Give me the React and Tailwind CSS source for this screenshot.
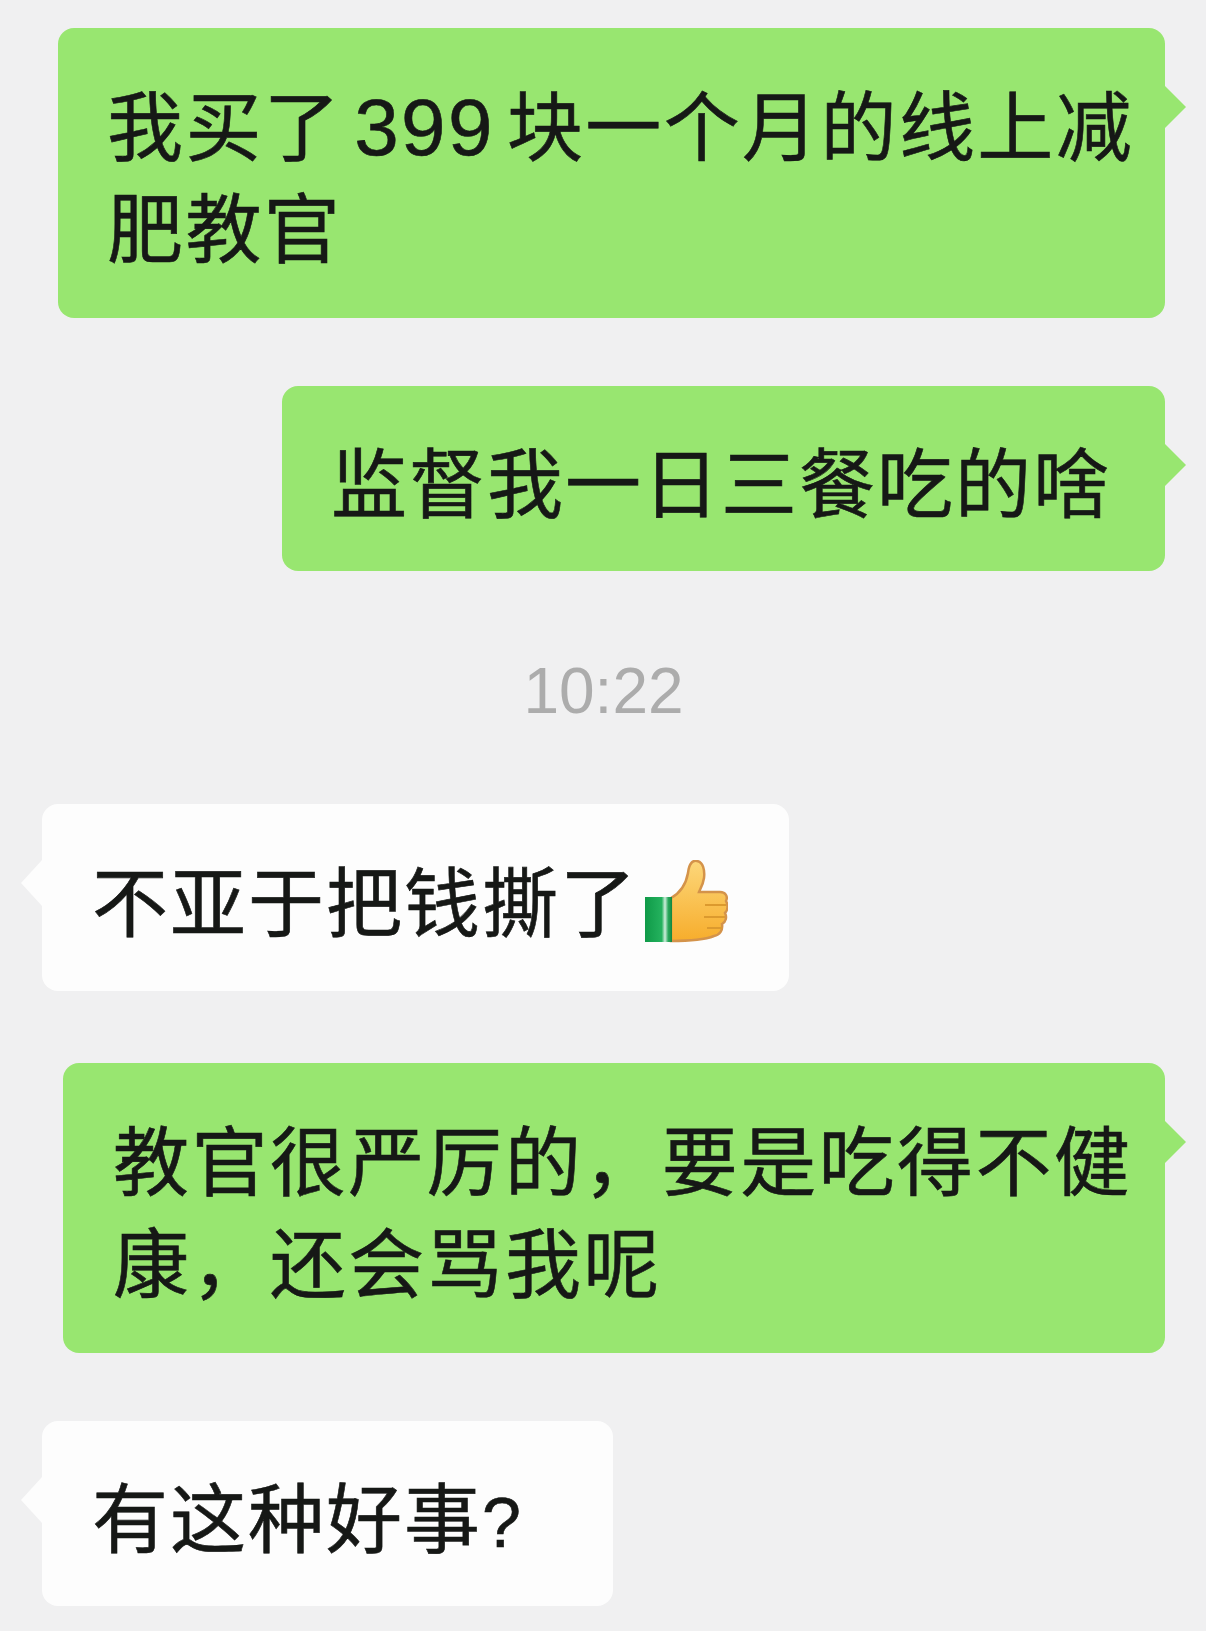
const font = { fontFamily: '"Noto Sans CJK SC", "Liberation Sans", sans-serif' };

function Bubble({ side, width, height, children, className }) {
  const isRight = side === "right";
  return (
    <div
      className={`relative flex flex-col justify-center rounded-[16px] ${isRight ? "self-end bg-[#98e670]" : "self-start bg-[#fdfdfd]"} ${className}`}
      style={{ width, height }}
    >
      {isRight ? (
        <div className="absolute left-full top-[58px] h-0 w-0 border-y-[21px] border-l-[21px] border-y-transparent border-l-[#98e670]" />
      ) : (
        <div className="absolute right-full top-[56px] h-0 w-0 border-y-[23px] border-r-[21px] border-y-transparent border-r-[#fdfdfd]" />
      )}
      {children}
    </div>
  );
}

function Thumb() {
  return (
    <svg width="84" height="84" viewBox="0 0 84 84" className="ml-[6px] mt-[8px] shrink-0">
      <defs>
        <linearGradient id="hand" x1="0" y1="0" x2="0" y2="1">
          <stop offset="0" stopColor="#fcd77a" />
          <stop offset="1" stopColor="#f7ad2c" />
        </linearGradient>
        <linearGradient id="cuff" x1="0" y1="0" x2="1" y2="0">
          <stop offset="0" stopColor="#0f9a48" />
          <stop offset="0.62" stopColor="#24b25e" />
          <stop offset="0.74" stopColor="#cfeedd" />
          <stop offset="0.86" stopColor="#2aa95d" />
          <stop offset="1" stopColor="#12863f" />
        </linearGradient>
      </defs>
      <path
        d="M27 38 C36 33 42 24 44 13 C45 3 49 0 53 1 C59 2 61 10 60 18 C59 25 56 29 55 32 L76 32 C82 32 84 37 82 41 C84 45 84 50 81 53 C83 57 82 62 78 64 C79 70 76 75 70 76 C60 80 40 81 27 81 Z"
        fill="url(#hand)"
        stroke="#d4934a"
        strokeWidth="2.5"
      />
      <path d="M61 45 L82 45 M60 57 L81 57 M63 68 L78 68" stroke="#dc9a2e" strokeWidth="2" fill="none" />
      <rect x="1" y="37" width="27" height="45" fill="url(#cuff)" />
    </svg>
  );
}

const textClass = "whitespace-nowrap text-[76px] leading-[102px] tracking-[2px] [-webkit-text-stroke:0.6px_#161816]";
const wideClass = "whitespace-nowrap text-[76px] leading-[102px] tracking-[2.4px] [-webkit-text-stroke:0.6px_#161816]";

export default function App() {
  return (
    <div className="flex h-[1631px] w-[1206px] flex-col overflow-hidden bg-[#f0f0f1] pr-[41px] pl-[42px] pt-[28px] text-[#161816]" style={font}>
      <Bubble side="right" width={1107} height={290} className="pl-[49px]">
        <div className={wideClass}>
          我买了<span className="mx-[12px] font-['Liberation_Sans'] text-[80px] leading-none">399</span>块一个月的线上减
          <br />
          肥教官
        </div>
      </Bubble>
      <Bubble side="right" width={883} height={185} className="mt-[68px] pl-[49px]">
        <div className={textClass}>监督我一日三餐吃的啥</div>
      </Bubble>
      <div className="mt-[80px] self-center font-['Liberation_Sans'] text-[64px] leading-[80px] text-[#acacac]">10:22</div>
      <Bubble side="left" width={747} height={187} className="mt-[73px] pl-[50px]">
        <div className={`flex items-center ${textClass}`}>
          不亚于把钱撕了
          <Thumb />
        </div>
      </Bubble>
      <Bubble side="right" width={1102} height={290} className="mt-[72px] pl-[50px]">
        <div className={wideClass}>
          教官很严厉的，要是吃得不健
          <br />
          康，还会骂我呢
        </div>
      </Bubble>
      <Bubble side="left" width={571} height={185} className="mt-[68px] pl-[50px]">
        <div className={textClass}>
          有这种好事<span className="font-['Liberation_Sans'] text-[70px] leading-none">?</span>
        </div>
      </Bubble>
    </div>
  );
}
